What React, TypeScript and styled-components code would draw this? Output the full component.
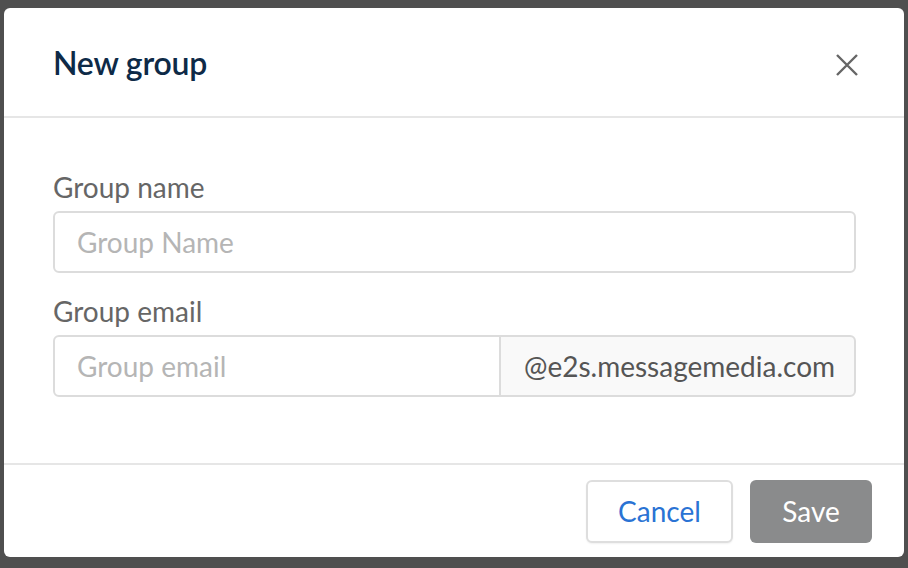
import React from "react";
import styled, { createGlobalStyle } from "styled-components";

const Global = createGlobalStyle`
  html, body { margin: 0; padding: 0; }
  body {
    background: #4f4f4f;
    font-family: Lato, "Open Sans", "Liberation Sans", sans-serif;
  }
`;

const Overlay = styled.div`
  width: 908px;
  height: 568px;
  box-sizing: border-box;
  padding: 8px 4px 11px 4px;
  background: #4f4f4f;
  display: flex;
`;

const Modal = styled.div`
  flex: 1;
  background: #ffffff;
  border-radius: 6px;
  display: flex;
  flex-direction: column;
  overflow: hidden;
`;

const Header = styled.div`
  height: 110px;
  box-sizing: border-box;
  padding: 0 44px 0 49px;
  display: flex;
  align-items: center;
  justify-content: space-between;
  border-bottom: 2px solid #e6e6e6;
`;

const Title = styled.h2`
  margin: 0;
  font-size: 32px;
  font-weight: 600;
  color: #0e2a47;
  letter-spacing: -0.2px;
`;

const CloseButton = styled.button`
  border: none;
  background: none;
  padding: 0;
  margin-top: 5px;
  width: 26px;
  height: 26px;
  display: flex;
  align-items: center;
  justify-content: center;
  cursor: pointer;
`;

const Body = styled.div`
  flex: 1;
  padding: 52px 48px 0 49px;
  display: flex;
  flex-direction: column;
  gap: 21px;
`;

const Field = styled.div`
  display: flex;
  flex-direction: column;
`;

const Label = styled.label`
  font-size: 28px;
  color: #666666;
  line-height: 34px;
  margin-bottom: 7px;
`;

const TextInput = styled.input<{ $group?: boolean }>`
  height: 62px;
  box-sizing: border-box;
  border: 2px solid #dcdcdc;
  border-radius: ${(p) => (p.$group ? "6px 0 0 6px" : "6px")};
  padding: 0 22px;
  font-family: inherit;
  font-size: 28px;
  color: #333;
  outline: none;
  flex: ${(p) => (p.$group ? "1" : "none")};
  min-width: 0;
  &::placeholder { color: #b5b5b5; }
`;

const InputGroup = styled.div`
  display: flex;
  height: 62px;
`;

const Addon = styled.div`
  width: 357px;
  box-sizing: border-box;
  border: 2px solid #dcdcdc;
  border-radius: 0 6px 6px 0;
  margin-left: -2px;
  background: #f9f9f9;
  display: flex;
  align-items: center;
  padding-left: 23px;
  font-size: 28px;
  color: #555555;
`;

const Footer = styled.div`
  height: 94px;
  box-sizing: border-box;
  border-top: 2px solid #e6e6e6;
  padding: 0 32px 0 0;
  display: flex;
  align-items: center;
  justify-content: flex-end;
  gap: 17px;
`;

const Button = styled.button<{ $primary?: boolean }>`
  height: 63px;
  box-sizing: border-box;
  border-radius: 6px;
  font-family: inherit;
  font-size: 28px;
  padding: 0;
  width: ${(p) => (p.$primary ? "122px" : "147px")};
  border: ${(p) => (p.$primary ? "none" : "2px solid #dedede")};
  background: ${(p) => (p.$primary ? "#8a8b8c" : "#ffffff")};
  color: ${(p) => (p.$primary ? "#ffffff" : "#2a73d4")};
  box-shadow: ${(p) => (p.$primary ? "none" : "0 1px 2px rgba(0,0,0,0.06)")};
  cursor: pointer;
`;

export default function App() {
  return (
    <>
      <Global />
      <Overlay>
        <Modal>
          <Header>
            <Title>New group</Title>
            <CloseButton aria-label="Close">
              <svg width="24" height="24" viewBox="0 0 24 24">
                <path d="M2 2 L22 22 M22 2 L2 22" stroke="#666" strokeWidth="2.4" fill="none" />
              </svg>
            </CloseButton>
          </Header>
          <Body>
            <Field>
              <Label>Group name</Label>
              <TextInput placeholder="Group Name" />
            </Field>
            <Field>
              <Label>Group email</Label>
              <InputGroup>
                <TextInput $group placeholder="Group email" />
                <Addon>@e2s.messagemedia.com</Addon>
              </InputGroup>
            </Field>
          </Body>
          <Footer>
            <Button>Cancel</Button>
            <Button $primary>Save</Button>
          </Footer>
        </Modal>
      </Overlay>
    </>
  );
}
